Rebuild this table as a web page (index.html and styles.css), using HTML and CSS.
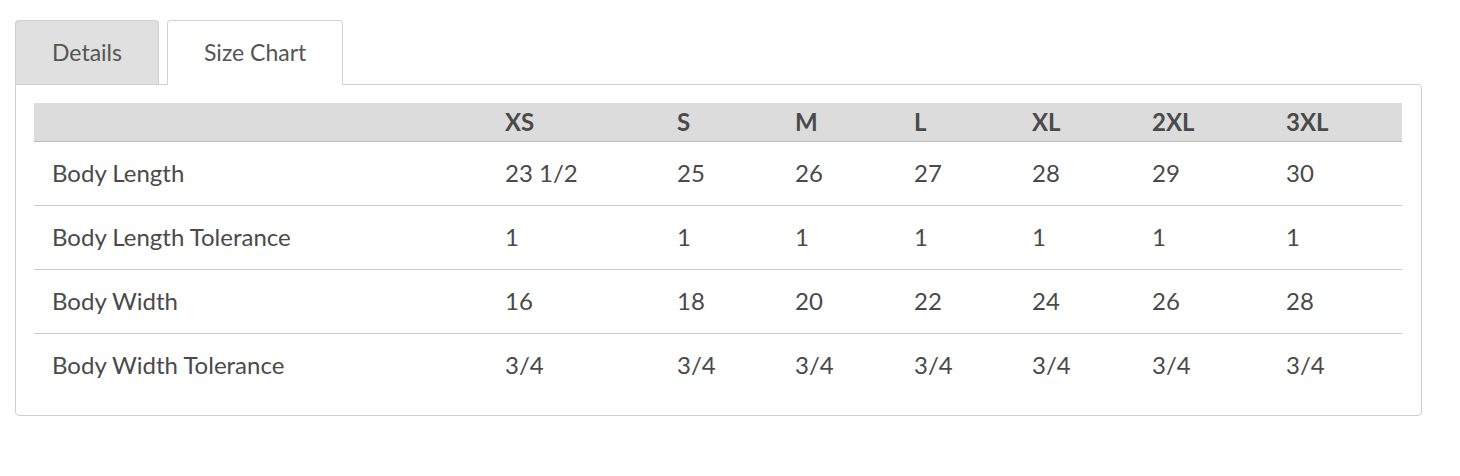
FILE: index.html
```html
<!DOCTYPE html>
<html>
<head>
<meta charset="utf-8">
<link rel="stylesheet" href="styles.css">
</head>
<body>
<div class="wrap">
  <div class="tabs">
    <div class="tab">Details</div>
    <div class="tab active">Size Chart</div>
  </div>
  <div class="panel">
    <table class="chart">
      <colgroup>
        <col class="c-label"><col class="c-xs"><col class="c-s"><col class="c-m"><col class="c-l"><col class="c-xl"><col class="c-2xl"><col class="c-3xl">
      </colgroup>
      <thead>
        <tr><th></th><th>XS</th><th>S</th><th>M</th><th>L</th><th>XL</th><th>2XL</th><th>3XL</th></tr>
      </thead>
      <tbody>
        <tr><td>Body Length</td><td>23 1/2</td><td>25</td><td>26</td><td>27</td><td>28</td><td>29</td><td>30</td></tr>
        <tr><td>Body Length Tolerance</td><td>1</td><td>1</td><td>1</td><td>1</td><td>1</td><td>1</td><td>1</td></tr>
        <tr><td>Body Width</td><td>16</td><td>18</td><td>20</td><td>22</td><td>24</td><td>26</td><td>28</td></tr>
        <tr><td>Body Width Tolerance</td><td>3/4</td><td>3/4</td><td>3/4</td><td>3/4</td><td>3/4</td><td>3/4</td><td>3/4</td></tr>
      </tbody>
    </table>
  </div>
</div>
</body>
</html>
```

FILE: styles.css
```css
html, body {
  margin: 0;
  padding: 0;
  background: #fff;
}
body {
  font-family: Lato, "Open Sans", sans-serif;
  color: #4a4a4a;
}
.wrap {
  padding: 20px 0 0 15px;
  width: 1407px;
}
.tabs {
  display: flex;
  gap: 8px;
  position: relative;
  z-index: 1;
}
.tab {
  box-sizing: border-box;
  height: 65px;
  padding: 0 36px 2px;
  display: flex;
  align-items: center;
  font-size: 23px;
  background: #e0e0e0;
  border: 1px solid #cfcfcf;
  border-bottom: none;
  border-radius: 4px 4px 0 0;
  color: #555;
}
.tab:first-child { height: 64px; }
.tab.active {
  background: #fff;
  border-color: #d2d2d2;
}
.panel {
  box-sizing: border-box;
  margin-top: -1px;
  border: 1px solid #cfcfcf;
  border-radius: 0 4px 4px 4px;
  padding: 18px 19px 18px 18px;
}
.chart {
  width: 100%;
  border-collapse: collapse;
  table-layout: fixed;
  font-size: 24px;
  color: #4a4a4a;
}
.c-label { width: 453px; }
.c-xs { width: 172px; }
.c-s { width: 118px; }
.c-m { width: 119px; }
.c-l { width: 118px; }
.c-xl { width: 120px; }
.c-2xl { width: 134px; }
.c-3xl { width: 134px; }
.chart th {
  background: #dcdcdc;
  height: 36px;
  padding: 0 18px 2px;
  text-align: left;
  font-weight: 700;
  border-bottom: 1px solid #bdbdbd;
}
.chart td {
  height: 61px;
  padding: 0 18px 2px;
  text-align: left;
  border-bottom: 1px solid #c8c8c8;
}
.chart tbody tr:last-child td {
  border-bottom: none;
}
```
